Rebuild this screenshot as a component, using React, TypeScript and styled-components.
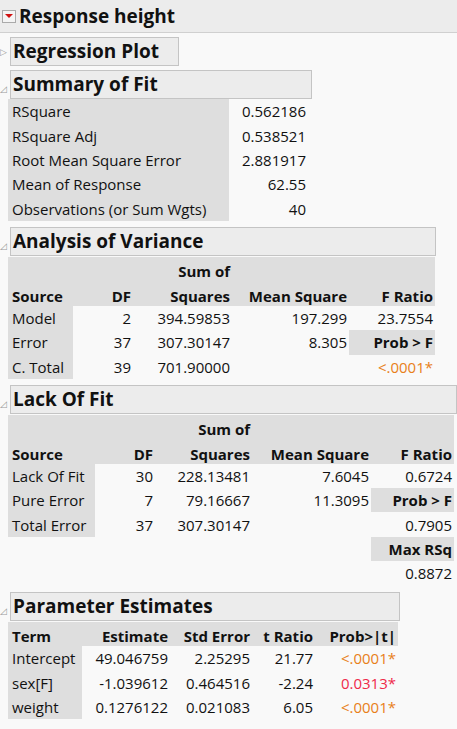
import React from 'react';
import styled, { createGlobalStyle } from 'styled-components';

const Global = createGlobalStyle`
  body { margin: 0; background: #f9f9f9; font-family: "Open Sans", "Noto Sans", sans-serif; color: #111; }
`;

const Page = styled.div`
  width: 457px;
  height: 729px;
  overflow: hidden;
  position: relative;
`;

const TopBar = styled.div`
  height: 32px;
  background: #ececec;
  border-bottom: 1px solid #d0d0d0;
  display: flex;
  align-items: center;
  gap: 3px;
  padding-left: 2px;
  font-weight: 700;
  font-size: 19px;
`;

const RedToggle = styled.span`
  width: 12px;
  height: 11px;
  border: 1px solid #aaa;
  background: #f4f4f4;
  display: inline-flex;
  align-items: center;
  justify-content: center;
  &::after {
    content: '';
    border-left: 4px solid transparent;
    border-right: 4px solid transparent;
    border-top: 4px solid #d01010;
  }
`;

const Section = styled.div`
  margin-top: 3px;
`;

const HeaderRow = styled.div`
  display: flex;
  align-items: center;
  height: 30px;
`;

const Disclosure = styled.span<{ $open: boolean }>`
  width: 10px;
  font-size: 9px;
  color: #999;
  line-height: 1;
  padding-top: ${(p) => (p.$open ? '8px' : '0')};
`;

const Title = styled.div<{ $w: number }>`
  width: ${(p) => p.$w}px;
  height: 29px;
  box-sizing: border-box;
  border: 1px solid #c4c4c4;
  background: #ececec;
  font-weight: 700;
  font-size: 19px;
  padding-left: 2px;
  line-height: 27px;
`;

const Table = styled.table<{ $w: number }>`
  margin: 0 0 6px 8px;
  border-collapse: collapse;
  table-layout: fixed;
  width: ${(p) => p.$w}px;
  font-size: 15px;
  td, th { padding: 0 2px 0 4px; height: 24.4px; white-space: nowrap; }
  th { font-weight: 700; background: #dedede; text-align: right; vertical-align: bottom; }
  td { text-align: right; }
`;

const Lab = styled.td`
  && { text-align: left; background: #dedede; }
`;
const LTh = styled.th`
  && { text-align: left; }
`;
const Grey = styled.td`
  && { background: #dedede; font-weight: 700; }
`;
const P = styled.span<{ $c: string }>`
  color: ${(p) => p.$c};
`;
const ORANGE = '#e8801a';
const RED = '#ef2a4a';

const Sec = ({ title, w, open = true, children }: { title: string; w: number; open?: boolean; children?: React.ReactNode }) => (
  <Section>
    <HeaderRow>
      <Disclosure $open={open}>{open ? '◿' : '▷'}</Disclosure>
      <Title $w={w}>{title}</Title>
    </HeaderRow>
    {children}
  </Section>
);

export default function App() {
  return (
    <Page>
      <Global />
      <TopBar>
        <RedToggle />
        Response height
      </TopBar>
      <Sec title="Regression Plot" w={169} open={false} />
      <Sec title="Summary of Fit" w={302}>
        <Table $w={300}>
          <colgroup><col style={{ width: 221 }} /><col style={{ width: 79 }} /></colgroup>
          <tbody>
            <tr><Lab>RSquare</Lab><td>0.562186</td></tr>
            <tr><Lab>RSquare Adj</Lab><td>0.538521</td></tr>
            <tr><Lab>Root Mean Square Error</Lab><td>2.881917</td></tr>
            <tr><Lab>Mean of Response</Lab><td>62.55</td></tr>
            <tr><Lab>Observations (or Sum Wgts)</Lab><td>40</td></tr>
          </tbody>
        </Table>
      </Sec>
      <Sec title="Analysis of Variance" w={426}>
        <Table $w={427}>
          <colgroup><col style={{ width: 65 }} /><col style={{ width: 60 }} /><col style={{ width: 99 }} /><col style={{ width: 117 }} /><col style={{ width: 86 }} /></colgroup>
          <tbody>
            <tr><LTh></LTh><th></th><th>Sum of</th><th></th><th></th></tr>
            <tr><LTh>Source</LTh><th>DF</th><th>Squares</th><th>Mean Square</th><th>F Ratio</th></tr>
            <tr><Lab>Model</Lab><td>2</td><td>394.59853</td><td>197.299</td><td>23.7554</td></tr>
            <tr><Lab>Error</Lab><td>37</td><td>307.30147</td><td>8.305</td><Grey>Prob &gt; F</Grey></tr>
            <tr><Lab>C. Total</Lab><td>39</td><td>701.90000</td><td></td><td><P $c={ORANGE}>&lt;.0001*</P></td></tr>
          </tbody>
        </Table>
      </Sec>
      <Sec title="Lack Of Fit" w={447}>
        <Table $w={446}>
          <colgroup><col style={{ width: 87 }} /><col style={{ width: 60 }} /><col style={{ width: 97 }} /><col style={{ width: 119 }} /><col style={{ width: 83 }} /></colgroup>
          <tbody>
            <tr><LTh></LTh><th></th><th>Sum of</th><th></th><th></th></tr>
            <tr><LTh>Source</LTh><th>DF</th><th>Squares</th><th>Mean Square</th><th>F Ratio</th></tr>
            <tr><Lab>Lack Of Fit</Lab><td>30</td><td>228.13481</td><td>7.6045</td><td>0.6724</td></tr>
            <tr><Lab>Pure Error</Lab><td>7</td><td>79.16667</td><td>11.3095</td><Grey>Prob &gt; F</Grey></tr>
            <tr><Lab>Total Error</Lab><td>37</td><td>307.30147</td><td></td><td>0.7905</td></tr>
            <tr><td></td><td></td><td></td><td></td><Grey>Max RSq</Grey></tr>
            <tr><td></td><td></td><td></td><td></td><td>0.8872</td></tr>
          </tbody>
        </Table>
      </Sec>
      <Sec title="Parameter Estimates" w={390}>
        <Table $w={390}>
          <colgroup><col style={{ width: 74 }} /><col style={{ width: 88 }} /><col style={{ width: 82 }} /><col style={{ width: 63 }} /><col style={{ width: 83 }} /></colgroup>
          <tbody>
            <tr><LTh>Term</LTh><th>Estimate</th><th>Std Error</th><th>t Ratio</th><th>Prob&gt;|t|</th></tr>
            <tr><Lab>Intercept</Lab><td>49.046759</td><td>2.25295</td><td>21.77</td><td><P $c={ORANGE}>&lt;.0001*</P></td></tr>
            <tr><Lab>sex[F]</Lab><td>-1.039612</td><td>0.464516</td><td>-2.24</td><td><P $c={RED}>0.0313*</P></td></tr>
            <tr><Lab>weight</Lab><td>0.1276122</td><td>0.021083</td><td>6.05</td><td><P $c={ORANGE}>&lt;.0001*</P></td></tr>
          </tbody>
        </Table>
      </Sec>
    </Page>
  );
}
